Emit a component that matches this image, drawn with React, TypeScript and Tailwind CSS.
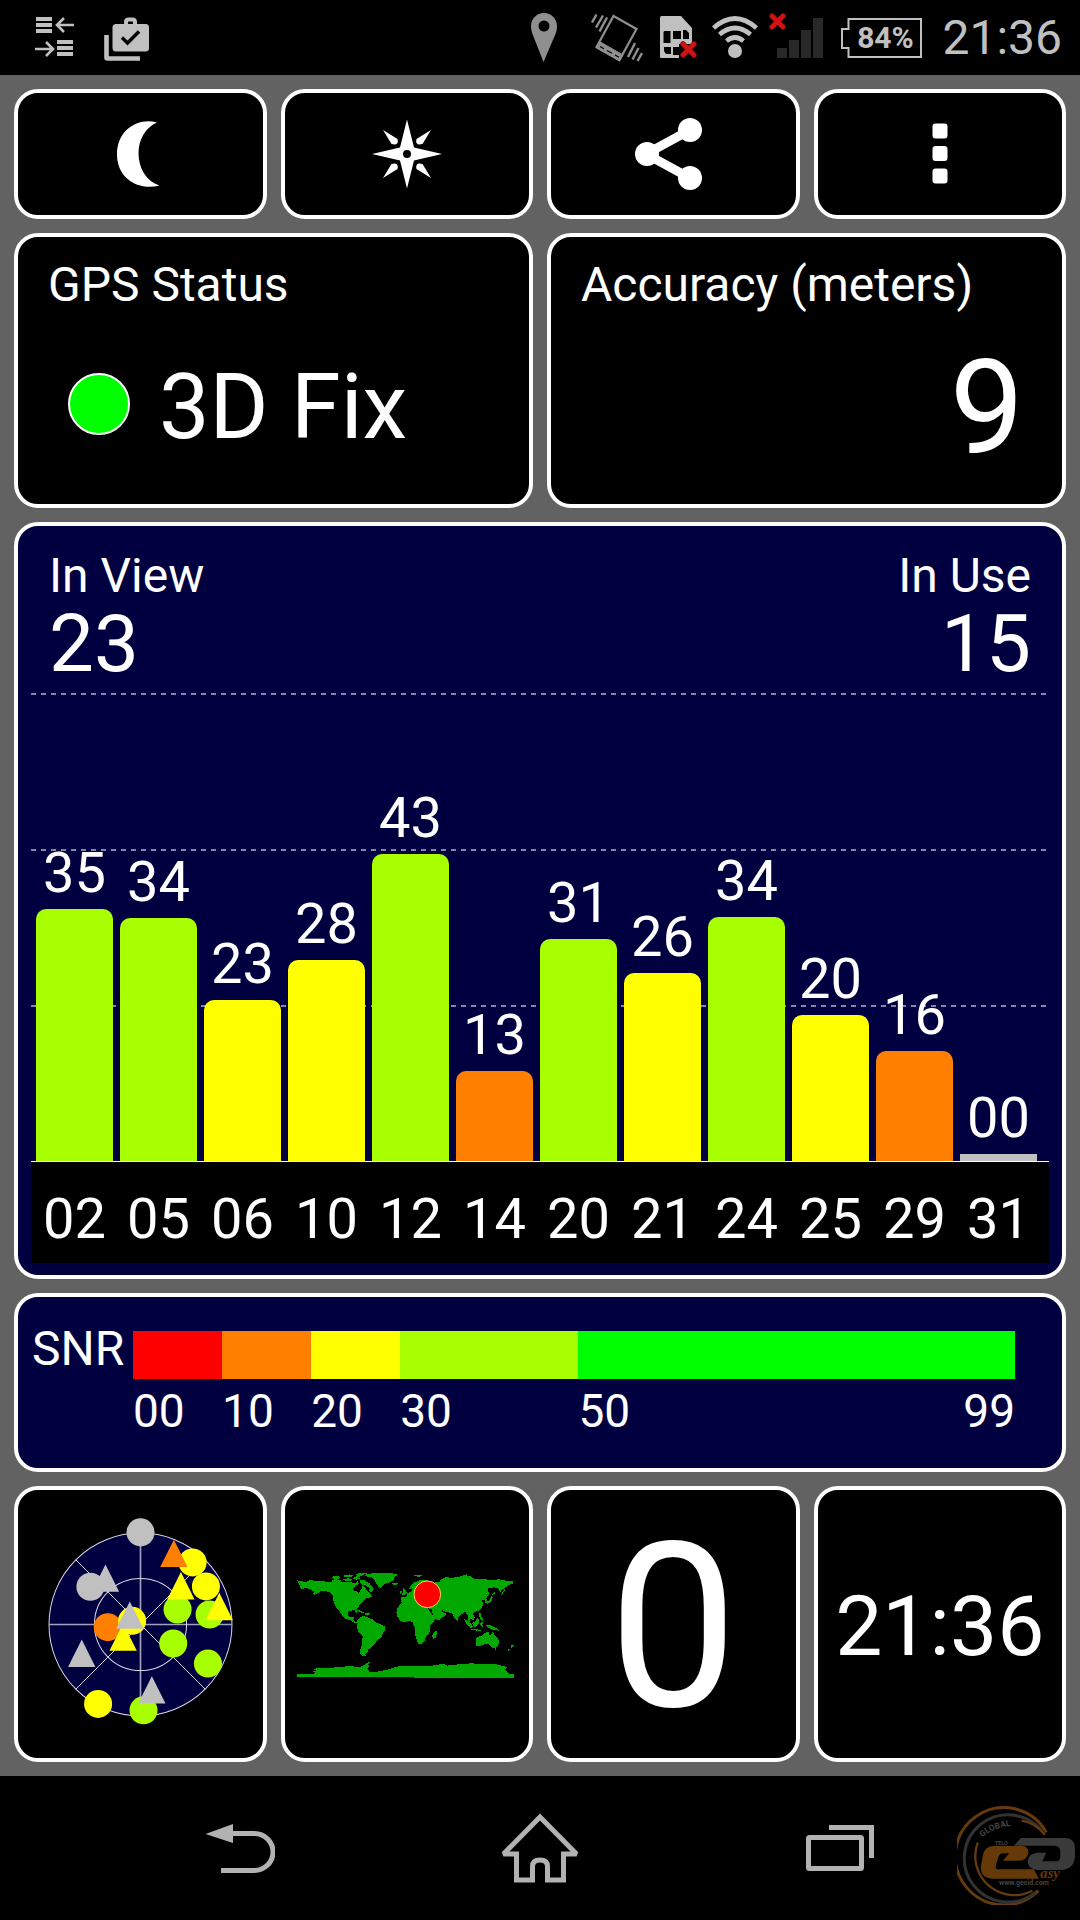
import React from "react";

type Satellite = { id: string; snr: string; height: number; tone: string };

const GREEN = "bg-[#a8ff00]";
const YELLOW = "bg-[#ffff00]";
const ORANGE = "bg-[#ff8000]";
const GREY = "bg-[#c0c0c0]";

const satellites: Satellite[] = [
  { id: "02", snr: "35", height: 252, tone: GREEN },
  { id: "05", snr: "34", height: 243, tone: GREEN },
  { id: "06", snr: "23", height: 161, tone: YELLOW },
  { id: "10", snr: "28", height: 201, tone: YELLOW },
  { id: "12", snr: "43", height: 307, tone: GREEN },
  { id: "14", snr: "13", height: 90, tone: ORANGE },
  { id: "20", snr: "31", height: 222, tone: GREEN },
  { id: "21", snr: "26", height: 188, tone: YELLOW },
  { id: "24", snr: "34", height: 244, tone: GREEN },
  { id: "25", snr: "20", height: 146, tone: YELLOW },
  { id: "29", snr: "16", height: 110, tone: ORANGE },
  { id: "31", snr: "00", height: 7, tone: GREY },
];

const card = "rounded-[24px] border-4 border-white";
const gridLine =
  "h-0.5 bg-[repeating-linear-gradient(90deg,#8585a8_0_5px,transparent_5px_10px)]";

function RedCross({ x, y }: { x: number; y: number }) {
  return (
    <g transform={`translate(${x} ${y})`} strokeLinecap="round">
      <path d="M-5.5-5.5 5.5 5.5M5.5-5.5-5.5 5.5" stroke="#8c0a0a" strokeWidth="5.5" />
      <path d="M-5.5-5.5 5.5 5.5M5.5-5.5-5.5 5.5" stroke="#d01414" strokeWidth="4" />
    </g>
  );
}

function StatusBar() {
  return (
    <header className="flex h-[75px] items-center bg-black pl-[35px] pr-[18px] text-[#c0c0c0]">
      <svg className="h-[51px] w-10" viewBox="35 12 40 51" fill="currentColor" aria-label="Transfer">
        <path d="M36 17h16v4H36zM36 23h16v4H36zM36 29h16v4H36zM57 40h16v4H57zM57 46h16v4H57zM57 52h16v4H57z" />
        <path d="M74 25H57.500M64 18l-7 7 7 7M35 49h17M46 42l7 7-7 7" fill="none" stroke="currentColor" strokeWidth="2.600" />
      </svg>
      <svg className="ml-7 h-[51px] w-[47px]" viewBox="103 12 47 51" aria-label="Work apps">
        <path d="M106.500 35v22.500q0 1 1 1H140" fill="none" stroke="currentColor" strokeWidth="4.600" />
        <path d="M126 25v-3q0-2.500 2.500-2.500h4q2.500 0 2.500 2.500v3" fill="none" stroke="currentColor" strokeWidth="4" />
        <rect x="112.500" y="24" width="36.500" height="27.500" rx="3.500" fill="currentColor" />
        <path d="M122 37.500l5.500 5.500 11.500-11.500" fill="none" stroke="#000" strokeWidth="3.400" />
      </svg>
      <div className="ml-auto flex items-center">
        <svg className="h-[51px] w-[26px]" viewBox="531 12 26 51" aria-label="Location">
          <path
            fillRule="evenodd"
            fill="#8f8f8f"
            d="M544 13c-7.500 0-13 6-13 13 0 3 .6 5 1.500 8L543.500 62 555.500 34c1-3 1.500-5 1.500-8 0-7-5.500-13-13-13zm0 7.500a5.500 5.500 0 1 1 0 11 5.500 5.500 0 0 1 0-11z"
          />
        </svg>
        <svg className="ml-[34px] h-[51px] w-[52px]" viewBox="591 12 52 51" fill="none" stroke="#8f8f8f" aria-label="Vibrate">
          <path d="M613.500 16l23 13-17 31-23-13z" strokeWidth="2.200" />
          <path d="M599.500 41.500l23.500 13.500-3.500 6-23-13z" fill="#8f8f8f" />
          <path d="M600 46.500l4 2.300M607 50.500l5 2.800M615 55l4 2.300" stroke="#000" strokeWidth="1.200" />
          <path d="M592 22.500l4.500-8M596 27.500l7-12M599.500 31.500l7.500-14M628 57l7-14M632.500 59.500l6-11.500M637.500 61l4.500-8" strokeWidth="2.400" />
        </svg>
        <svg className="ml-[17px] h-[51px] w-[38px]" viewBox="660 12 38 51" aria-label="No SIM">
          <path d="M661.500 16H681l11 12v30h-31q-1 0-1-1V17.500q0-1.500 1.500-1.500z" fill="currentColor" />
          <path d="M664.500 31h6v12h-7V32zM673 31h8v8h-8zM683 30h3l3 3v6h-6zM664 47h7v7h-5l-2-3zM673 47h8v8h-8zM679 44h14v15h-14z" fill="#000" />
          <RedCross x={688.500} y={49.500} />
        </svg>
        <svg className="ml-3.5 h-[51px] w-[46px]" viewBox="712 12 46 51" aria-label="Wi-Fi">
          <circle cx="735" cy="51" r="7" fill="currentColor" />
          <path d="M713.500 28q21.500-19 43 0M719.500 34.500q15.500-13 31 0M726.500 41q8.500-7 17 0" fill="none" stroke="currentColor" strokeWidth="4.600" />
        </svg>
        <svg className="ml-[11px] h-[51px] w-[55px]" viewBox="769 12 55 51" aria-label="No signal">
          <path d="M777 48h10v10h-10zM789 40h10v18h-10zM801 30h10v28h-10zM813 18h10v40h-10z" fill="#282828" />
          <RedCross x={777.500} y={21.500} />
        </svg>
        <div className="relative ml-[17px] flex h-10 w-[81px] items-center justify-center pl-[7px]">
          <svg className="absolute inset-0 h-full w-full" viewBox="0 0 81 40" fill="none" aria-hidden="true">
            <path d="M7.500 1H80v38H7.500v-9H1V11h6.500z" stroke="currentColor" strokeWidth="2" />
          </svg>
          <span className="text-[30px] font-bold leading-10">84%</span>
        </div>
        <time className="ml-5 text-[48px] leading-[56px]">21:36</time>
      </div>
    </header>
  );
}

function Toolbar() {
  const button = "flex h-[130px] items-center justify-center bg-black text-white " + card;
  return (
    <nav className="grid grid-cols-4 gap-3.5">
      <button className={button} aria-label="Night mode">
        <svg className="h-[72px] w-[72px]" viewBox="105 118 72 72" fill="currentColor">
          <path d="M158 122.500C140 117 118 129 118 154.500 118 179 140 191 160.500 185.500 147 181 139.500 168 139.500 153 139.500 139 147 127 158 122.500z" />
        </svg>
      </button>
      <button className={button} aria-label="Compass">
        <svg className="h-[72px] w-[72px]" viewBox="-36 -36 72 72" fill="currentColor">
          <path
            fillRule="evenodd"
            d="M0-34.500 7-6.500 35 0 7 6.500 0 34.500-7 6.500-35 0-7-6.500zM0-4a4 4 0 1 0 0 8 4 4 0 0 0 0-8z"
          />
          <path d="M24-24 15.500-10q-4.500 1-5.500-.5-1.500-1.500-.5-4.500zM-24-24l8.500 14q4.500 1 5.500-.5 1.500-1.500.5-4.500zM24 24 15.500 10q-4.500-1-5.500.5-1.500 1.500-.5 4.500zM-24 24l8.500-14q4.500-1 5.500.5 1.500 1.500.5 4.500z" />
        </svg>
      </button>
      <button className={button} aria-label="Share">
        <svg className="h-[76px] w-[76px]" viewBox="-38 -38 76 76" fill="currentColor">
          <path d="M17-24-27 0 17 24" fill="none" stroke="currentColor" strokeWidth="9" />
          <circle cx="17" cy="-24" r="12" />
          <circle cx="17" cy="24" r="12" />
          <circle cx="-26" cy="0" r="12" />
        </svg>
      </button>
      <button className={button} aria-label="More options">
        <svg className="h-16 w-4" viewBox="0 0 16 64" fill="currentColor">
          <rect x=".5" y="1.500" width="15" height="15" rx="3" />
          <rect x=".5" y="24" width="15" height="15" rx="3" />
          <rect x=".5" y="46.500" width="15" height="15" rx="3" />
        </svg>
      </button>
    </nav>
  );
}

function StatusCards() {
  return (
    <section className="grid grid-cols-2 gap-3.5">
      <article className={"h-[275px] bg-black px-[30px] pt-5 " + card}>
        <h2 className="text-[48px] leading-14">GPS Status</h2>
        <div className="mt-[47px] flex items-center gap-[29px] pl-5">
          <span className="mb-2 size-[62px] rounded-full border-2 border-white bg-[#00ff00]" />
          <span className="text-[90px] leading-[96px]">3D Fix</span>
        </div>
      </article>
      <article className={"h-[275px] bg-black px-[30px] pt-5 " + card}>
        <h2 className="text-[48px] leading-14">Accuracy (meters)</h2>
        <p className="mt-6 pr-2 text-right text-[132px] leading-[142px]">9</p>
      </article>
    </section>
  );
}

function SatelliteChart() {
  return (
    <section className={"bg-[#000040] px-[13px] pb-3 pt-[22px] " + card}>
      <div className="flex h-[145px] justify-between px-[18px]">
        <div>
          <h2 className="text-[48px] leading-14">In View</h2>
          <p className="text-[80px] leading-[80px]">23</p>
        </div>
        <div className="text-right">
          <h2 className="text-[48px] leading-14">In Use</h2>
          <p className="text-[80px] leading-[80px]">15</p>
        </div>
      </div>
      <div className="relative flex h-[468px] items-end gap-[7px] pl-[5px] pr-3">
        <div className="absolute inset-0 flex flex-col justify-between pb-[154px]">
          <div className={gridLine} />
          <div className={gridLine} />
          <div className={gridLine} />
        </div>
        {satellites.map((s) => (
          <div key={s.id} className="relative flex min-w-0 flex-1 flex-col items-center">
            <span className="text-[56px] leading-[72px]">{s.snr}</span>
            <div
              className={"w-full " + s.tone + (s.height > 20 ? " rounded-t-[10px]" : "")}
              style={{ height: s.height }}
            />
          </div>
        ))}
      </div>
      <div className="flex h-[102px] gap-[7px] border-t border-white bg-black pl-[5px] pr-3 pt-3">
        {satellites.map((s) => (
          <span key={s.id} className="min-w-0 flex-1 text-center text-[56px] leading-[90px]">
            {s.id}
          </span>
        ))}
      </div>
    </section>
  );
}

function SnrLegend() {
  const columns = "grid grid-cols-[10fr_10fr_10fr_20fr_49fr]";
  return (
    <section className={"flex h-[179px] bg-[#000040] pl-3.5 pr-[47px] pt-[34px] " + card}>
      <h2 className="w-[101px] shrink-0 text-[48px] leading-[36px]">SNR</h2>
      <div className="flex-1">
        <div className={columns + " h-12"}>
          <div className="bg-[#ff0000]" />
          <div className="bg-[#ff8000]" />
          <div className="bg-[#ffff00]" />
          <div className="bg-[#a8ff00]" />
          <div className="bg-[#00ff00]" />
        </div>
        <div className={columns + " mt-1 text-[46px] leading-14"}>
          <span>00</span>
          <span>10</span>
          <span>20</span>
          <span>30</span>
          <span className="flex justify-between">
            <span>50</span>
            <span>99</span>
          </span>
        </div>
      </div>
    </section>
  );
}

function Dot({ x, y, fill }: { x: number; y: number; fill: string }) {
  return <circle cx={x} cy={y} r="42" fill={fill} />;
}

function Tri({ x, y, fill }: { x: number; y: number; fill: string }) {
  return <path d={`M${x} ${y}l41 82h-82z`} fill={fill} />;
}

function SkyView() {
  return (
    <svg className="h-[215px] w-[187px]" viewBox="80 110 560 644" aria-label="Sky view">
      <g fill="#000040" stroke="#d8d8e8" strokeWidth="3">
        <circle cx="360" cy="432" r="274" />
        <path d="M166 238l388 388M554 238 166 626" stroke="#ffffff" strokeWidth="2.500" />
        <path d="M360 158v548M86 432h548" stroke="#a0a0c0" strokeWidth="5" />
        <circle cx="360" cy="432" r="138" fill="none" />
      </g>
      <Dot x={360} y={156} fill="#c0c0c0" />
      <Dot x={516} y={246} fill="#ffff00" />
      <Tri x={460} y={178} fill="#ff8000" />
      <Dot x={210} y={319} fill="#c0c0c0" />
      <Tri x={255} y={252} fill="#c0c0c0" />
      <Dot x={556} y={318} fill="#ffff00" />
      <Dot x={471} y={387} fill="#a8ff00" />
      <Tri x={481} y={275} fill="#ffff00" />
      <Dot x={567} y={402} fill="#a8ff00" />
      <Tri x={596} y={337} fill="#ffff00" />
      <Dot x={262} y={440} fill="#ff8000" />
      <Tri x={308} y={429} fill="#ffff00" />
      <Dot x={335} y={421} fill="#ffff00" />
      <Tri x={328} y={363} fill="#c0c0c0" />
      <Tri x={184} y={477} fill="#c0c0c0" />
      <Dot x={458} y={489} fill="#a8ff00" />
      <Dot x={562} y={549} fill="#a8ff00" />
      <Dot x={233} y={670} fill="#ffff00" />
      <Dot x={369} y={689} fill="#a8ff00" />
      <Tri x={394} y={587} fill="#c0c0c0" />
    </svg>
  );
}

const landMasses = [
  "M50 91l8 5 20 1 8-4 24 1 40 4 15-4 20 5 25-2 12 5 10-7 4 8-10 6-9 8 5 7 8 1 4 8 5-9 7-6-1-9 9 4 5 10 8 8 9 11-8 3-8 1-4 4-8 8-9 6-4 9-7 8 2 9-3 1-4-8-14 1-6 6 1 9 6 5 8-3 3 6-3 5 8 5 12 2-3 3-13-2-12-7-16-6-9-9-5-9-8-10-8-10-5-16-1-15-11-9-15-5-12 2-9 6-8 4-8-2 9-6-10-4-4-6-16-1-12 2z",
  "M155 82l18-2 8 5-6 4-18-1zM152 92l14-2 16 3-4 4-16 0zM190 78l18-3 12 3-8 5-20 1zM188 90l16-3 14 4-10 5-14-2zM222 74l20-3 18 1-14 6-10 6-10-2 4-5zM212 85l20-1 8 4-12 3zM240 93l12 0 14 8 10 10 4 8-6 9-8-3 2-8-10-8-14-4-6-6z",
  "M255 76l20-4 35-2 34 3 8 4-9 5-3 10-14 7-16 7-8 10-9-5-6-11-4-8-10-9-18-2z",
  "M334 102l10-2 9 3-4 5-11-1zM226 182l16 2 14 8-10-1-12-5zM256 190l14 2-4 5-12-1z",
  "M238 205l8-5 12 2 10 5 10 3 8 9 16 6 13 8-1 9-8 12-3 11-12 6-6 12-8 6-6 8-8 4-2 8-6 4 1 7-10-1-7-5 1-14 5-16 2-22-10-10-8-17 3-12-3-10z",
  "M358 166l8-7 16-4 14 0 5 6 14 6 12-2 14 3 5 14 10 16 14 1-1 6-13 16-8 9 1 14-5 10-7 9-4 11-9 9-10 1-5-13-5-17-1-20-7-16-8-4-16 5-12-5-9-12-3-13 4-13zM457 252l11-8 2 9-4 12-7 5-3-8z",
  "M363 156l0-13 15 0 2-10 14-8 2-8-9 1 4-10 12-9 14-6 22-1 20 8 18-2 10-9 22-3 22-3 18-4 18 0 14 9 26 1 28 3 22-2 22 5 20 1v8l-14 2-8 7-12 8-6 8-5-12-12-3-18 3-2 6 6 12-8 8-2 4 5 10-7 3-4-10-8 3 4 8-2 12-10 10-14 5-4 5 6 12-6 9-10-8 2 14 9 12-5 2-9-16-2-18-8-12-10 6-10 8-4 14-8-8-7-15-8-3-12-2-12-6 2 6 12 4-3 6-17 13-8 1-14-22-3-12-14-1-8-6-8-5-6 9-8-6-8-4-8 3-10 8-12 2z",
  "M367 116l7 3 5 9-2 7-14 2 5-7zM360 126l5-2 0 7-5 2zM399 78l16-2 12 2-10 4-12-1zM478 94l12-9 22-3-18 8-8 8zM548 78l12-3-2 5-10 2zM612 160l10-2 8-10 4-10 3 7-4 12-12 6zM636 136l8-8-2 7zM660 138l8-12 6-8-2 8-10 14z",
  "M550 208l8 5 14 14 4 10-8-3-10-12zM572 238l18 2 14 2-2 3-28-3zM576 220l8-4 8-10 5 6-3 14-8 7-9-3zM596 190l6 2-1 10 6 5 3 8-7-2-6-10zM600 220l10-2-4 6 3 10-5-2-4-5zM614 226l10 0 14 5 12 6 6 7-14-2-12-3-10-6z",
  "M586 268l8-6 12-4 8-8 12-2-1 7 7 4 3-12 5 4 4 9 8 8 5 10-5 12-8 7-10-2-6-8-8-4-12 3-10 5-11 0-1-9zM642 294l8 1-5 7zM694 284l6 4-2 6-6 2zM690 296l-2 6-7 4 3-6z",
  "M50 384v-9l42 0 16-4-12-4 14-4-16-4 26-3 24 1 22-3 34-3 42 1 10-6 14-8 4-3-6 11 4 5-8 8 8 5-2 3 26 0 20-4 20-5 16-6 26-2 36 1 46-2 34-6 10 6 34-4 40-3 36 3 32-1 18 4 20 5-6 9 8 6 6 6h13v11z",
];

function WorldMap() {
  return (
    <svg className="w-[219px]" viewBox="50 59 657 328" aria-label="World map">
      <path d={landMasses.join("")} fill="#00a800" shapeRendering="crispEdges" />
      <circle cx="441" cy="135" r="40" fill="#ff0000" stroke="#ffd84a" strokeWidth="3" />
    </svg>
  );
}

function BottomCards() {
  const tile = "flex h-[276px] items-center justify-center bg-black " + card;
  return (
    <section className="grid grid-cols-4 gap-3.5">
      <article className={tile}>
        <SkyView />
      </article>
      <article className={tile}>
        <WorldMap />
      </article>
      <article className={tile + " pt-2"}>
        <span className="text-[230px] leading-[260px]">0</span>
      </article>
      <article className={tile + " pt-1.5"}>
        <time className="text-[84px] leading-[96px]">21:36</time>
      </article>
    </section>
  );
}

function Watermark() {
  return (
    <svg className="absolute bottom-[15px] right-[3px] h-[100px] w-[120px]" viewBox="20 15 360 300" fill="none" aria-label="GECID">
      <path d="M288 97A146 146 0 1 0 264 272" stroke="#653a0e" strokeWidth="9" />
      <path d="M274 92A131 131 0 1 0 254 278" stroke="#323232" strokeWidth="9" />
      <path d="M284 104Q254 68 214 62M82 128A117 117 0 0 0 246 272" stroke="#653a0e" strokeWidth="7" />
      <path id="ring-text" d="M96 112Q132 76 216 76" />
      <text fill="#444444" fontSize="25" fontFamily="Roboto, sans-serif" fontWeight="700">
        <textPath href="#ring-text">GLOBAL</textPath>
      </text>
      <text x="134" y="135" fill="#444444" fontSize="16" fontFamily="Roboto, sans-serif" fontWeight="700">TELO</text>
      <path d="M190 137L212 114H345Q374 114 374 146V166Q374 206 334 210H262Q232 208 232 184 234 160 262 158H288L276 184H318Q330 184 330 168V156Q330 137 312 137z" fill="#3a3a3a" />
      <path d="M130 138H212Q236 138 234 158 230 182 204 182H158L176 160H156Q148 160 144 172L136 198Q134 208 146 208H250L266 236H130Q88 236 92 198L98 164Q104 138 130 138z" fill="#663a08" />
      <text x="270" y="234" fill="#663a08" fontSize="44" fontFamily="Liberation Serif, serif" fontWeight="700" fontStyle="italic">asy</text>
      <text x="146" y="256" fill="#444444" fontSize="21" fontFamily="Roboto, sans-serif" fontWeight="700">www.gecid.com</text>
    </svg>
  );
}

function NavigationBar() {
  const button = "flex items-center justify-center text-[#b2b2b2]";
  return (
    <footer className="relative grid h-36 grid-cols-3 bg-black px-[90px]">
      <button className={button} aria-label="Back">
        <svg className="h-[50px] w-[70px]" viewBox="46 47 70 50" fill="none" stroke="currentColor" strokeWidth="5">
          <path d="M46.500 58 74 48v19z" fill="currentColor" stroke="none" />
          <path d="M73 57.500h22.500a18.500 18.500 0 0 1 0 37H62" />
        </svg>
      </button>
      <button className={button} aria-label="Home">
        <svg className="h-[70px] w-20" viewBox="340 37.500 80 70" fill="none" stroke="currentColor" strokeWidth="5" strokeLinejoin="round">
          <path d="M380 41.500 343.500 78.500H356.500V104.500H372.500V91Q372.500 84.500 380 84.500T387.500 91V104.500H403.500V78.500H416.500z" strokeLinejoin="miter" strokeMiterlimit="2" />
        </svg>
      </button>
      <button className={button} aria-label="Recent apps">
        <svg className="h-[46px] w-[68px]" viewBox="46 49 68 46" fill="none" stroke="currentColor" strokeWidth="5">
          <rect x="48.500" y="61.500" width="53" height="31" rx="1" />
          <path d="M69 51.500h42.500V82" />
        </svg>
      </button>
      <Watermark />
    </footer>
  );
}

export default function App() {
  return (
    <div className="flex min-h-screen flex-col bg-[#626262] font-['Roboto',sans-serif] font-normal text-white">
      <StatusBar />
      <main className="flex flex-1 flex-col gap-3.5 px-3.5 py-3.5">
        <Toolbar />
        <StatusCards />
        <SatelliteChart />
        <SnrLegend />
        <BottomCards />
      </main>
      <NavigationBar />
    </div>
  );
}
